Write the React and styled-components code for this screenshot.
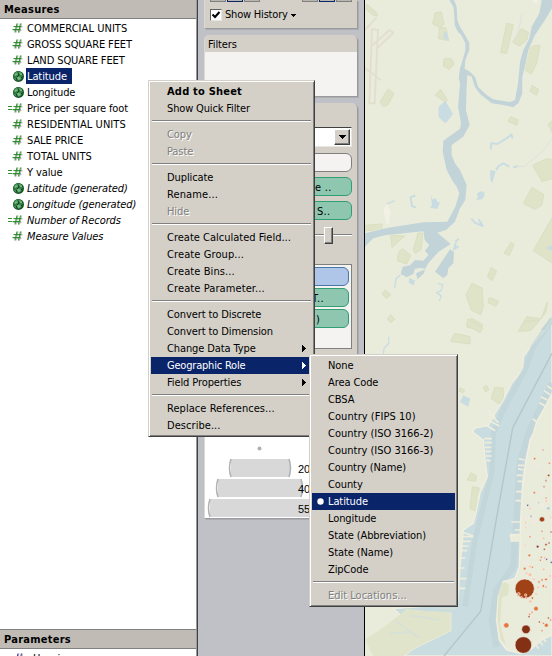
import React from "react";
import styled, { createGlobalStyle, css } from "styled-components";

const Global = createGlobalStyle`
  * { box-sizing: border-box; }
  body { margin: 0; overflow: hidden; font: 11px/16px "DejaVu Sans Condensed", "DejaVu Sans", sans-serif; font-stretch: condensed; color: #000; }
  svg { display: block; flex: none; }
`;

const Page = styled.div`
  position: relative;
  width: 552px;
  height: 656px;
  overflow: hidden;
  display: grid;
  grid-template-columns: 198px 166px 188px;
`;

const Text = styled.span`
  white-space: pre;
  letter-spacing: ${(p) => p.$ls ?? -0.1}px;
`;

/* Data pane */
const Sidebar = styled.aside`
  display: flex;
  flex-direction: column;
  height: 656px;
  background: #fff;
  border-right: 1px solid #404247;
  box-shadow: inset -1px 0 #9a9a9a;
`;
const SideHeader = styled.div`
  flex: none;
  height: ${(p) => (p.$ruled ? 20 : 19)}px;
  padding: 1px 0 0 4px;
  margin-right: 1px;
  line-height: 17px;
  font-weight: bold;
  background: #c0bcb5;
  border-bottom: 1px solid #808080;
  border-top: ${(p) => (p.$ruled ? "1px solid #808080" : "0")};
`;
const FieldList = styled.div`
  flex: 1;
  padding-top: 1px;
`;
const Field = styled.div`
  display: flex;
  align-items: center;
  height: 16px;
  font-style: ${(p) => (p.$generated ? "italic" : "normal")};
`;
const FieldIcon = styled.span`
  flex: none;
  width: 26px;
  padding-left: 7px;
`;
const FieldName = styled.span`
  height: 16px;
  padding: 0 5px 0 1px;
  line-height: 17px;
  background: ${(p) => (p.$selected ? "#0a246a" : "transparent")};
  color: ${(p) => (p.$selected ? "#fff" : "#000")};
`;
const Peek = styled.div`
  display: flex;
  gap: 7px;
  flex: none;
  height: 7px;
  padding: 2px 0 0 8px;
  overflow: hidden;
`;

/* Shelf column */
const Shelves = styled.section`
  display: flex;
  flex-direction: column;
  height: 656px;
  padding-left: 6px;
  background: #c0c1c6;
`;
const Card = styled.div`
  flex: none;
  width: 153px;
  height: ${(p) => p.$h}px;
  margin-bottom: ${(p) => p.$gap}px;
  background: #d4d0c8;
  border-left: 1px solid #dcd9d3;
  border-radius: ${(p) => (p.$square ? "0" : "5px 5px 0 0")};
  box-shadow: 1px 1px #999a9d, 2px 2px #acadb1;
`;
const ToolRow = styled.div`
  display: flex;
  gap: 1px;
  height: 2px;
  padding-left: 5px;
`;
const Tool = styled.span`
  width: 16px;
  height: 2px;
  margin-left: ${(p) => p.$space ?? 0}px;
  background: #b9b6b0;
  border: solid ${(p) => (p.$on ? "#0a246a" : "#808080")};
  border-width: 0 1px 1px;
`;
const History = styled.div`
  display: flex;
  align-items: center;
  gap: 3px;
  height: 16px;
  margin-top: 5px;
  padding-left: 5px;
`;
const Check = styled.span`
  width: 12px;
  height: 12px;
  background: #fff;
  border: 1px solid;
  border-color: #606060 #e8e6e0 #e8e6e0 #606060;
`;
const CardTitle = styled.div`
  height: 17px;
  padding-left: 3px;
  line-height: 19px;
`;
const DropArea = styled.div`
  height: 44px;
  background: #f4f3f1;
`;
const Marks = styled.div`
  display: flex;
  flex-direction: column;
  padding: 24px 5px 0 7px;
`;
const Select = styled.div`
  display: flex;
  justify-content: flex-end;
  height: 20px;
  padding: 1px;
  background: #fff;
  border: 1px solid;
  border-color: #404040 #e8e6e0 #e8e6e0 #404040;
`;
const SelectButton = styled.div`
  display: grid;
  place-items: center;
  width: 16px;
  height: 16px;
  background: #d4d0c8;
  border: 1px solid;
  border-color: #fff #404040 #404040 #fff;
  box-shadow: inset -1px -1px #808080;
`;
const tones = {
  plain: css`background: #f4f3f1; border-color: #808080;`,
  green: css`background: #8ec6b0; border-color: #319e74;`,
  blue: css`background: #b0c6e8; border-color: #4878a8;`,
};
const Pill = styled.div`
  flex: none;
  height: 19px;
  margin-top: ${(p) => p.$top}px;
  padding-left: ${(p) => p.$indent ?? 0}px;
  line-height: 19px;
  border: 1px solid;
  border-radius: 6px;
  ${(p) => tones[p.$tone]}
`;
const Slider = styled.div`
  display: flex;
  align-items: center;
  height: 18px;
  margin-top: 6px;
  padding-left: 112px;
  background: linear-gradient(#808080, #808080) 0 8px / 100% 1px no-repeat,
    linear-gradient(#fff, #fff) 0 9px / 100% 1px no-repeat;
`;
const Thumb = styled.div`
  width: 9px;
  height: 17px;
  background: #d4d0c8;
  border: 1px solid;
  border-color: #fff #404040 #404040 #fff;
  box-shadow: inset -1px -1px #808080;
`;
const DetailBox = styled.div`
  display: flex;
  flex-direction: column;
  height: 85px;
  margin-top: 20px;
  padding: 0 2px;
  background: #f4f3f1;
  border: 1px solid #808080;
`;
const Legend = styled(Card)`
  background: #fff;
`;

/* Map */
const MapPane = styled.main`
  border-left: 1px solid #000;
  background: #e9ecdb;
`;

/* Context menus */
const Menu = styled.div`
  position: absolute;
  left: ${(p) => p.$x}px;
  top: ${(p) => p.$y}px;
  width: ${(p) => p.$w}px;
  padding: 2px;
  background: #d4d0c8;
  border: 1px solid;
  border-color: #d4d0c8 #404040 #404040 #d4d0c8;
  box-shadow: inset 1px 1px #fff, inset -1px -1px #808080;
`;
const Item = styled.div`
  display: flex;
  align-items: center;
  height: 17px;
  padding-right: 6px;
  line-height: 17px;
  font-weight: ${(p) => (p.$bold ? "bold" : "normal")};
  ${(p) => p.$active && css`background: #0a246a; color: #fff;`}
  ${(p) => p.$disabled && css`color: #808080; text-shadow: 1px 1px #fff;`}
`;
const Gutter = styled.span`
  flex: none;
  display: grid;
  place-items: center;
  width: 16px;
`;
const ItemArrow = styled.span`
  margin-left: auto;
`;
const Rule = styled.div`
  height: 2px;
  margin: 3px 1px 4px;
  background: #fff;
  border-top: 1px solid #808080;
`;

const Hash = ({ calc, color = "#2f9130" }) => (
  <svg width="18" height="14" viewBox="0 0 18 14" fill="none">
    <path d="M9 11.500l2-9M12.500 11.500l2-9M7.500 6h8M6.500 9.500h8" stroke="#b4b4b4" />
    <path d="M8 11.500l2-9M11.500 11.500l2-9M6.500 5.500h8M5.500 8.500h8" stroke={color} strokeWidth="1.100" />
    {calc && <path d="M1 5.500h4M1 8.500h4" stroke={color} />}
  </svg>
);
const Globe = () => (
  <svg width="18" height="14" viewBox="0 0 18 14">
    <circle cx="11.500" cy="7.400" r="5.500" fill="#17502a" />
    <circle cx="11" cy="6.900" r="4.600" fill="#2f7a3e" />
    <path d="M7 6l2-2.500 2 .5-.5 2-2 1zM12 3l2.500 1 1 2.500-2.500-.5zM10 8l3-.5 1 2-2 2-1.500-1zM7 8.500l1.500 1 .5 2z" fill="#6fb67b" />
    <path d="M11 4l1 2-2 2M14 8l1 1M9 9l1 2" stroke="#123f20" fill="none" />
  </svg>
);
const Caret = ({ w = 7, h = 4 }) => (
  <svg width={w} height={h} viewBox="0 0 7 4" preserveAspectRatio="none" shapeRendering="crispEdges"><path d="M0 0h7L3.500 4z" /></svg>
);

const fields = [
  ["hash", "COMMERCIAL UNITS", 0, false, 0.05],
  ["hash", "GROSS SQUARE FEET"],
  ["hash", "LAND SQUARE FEET"],
  ["geo", "Latitude", 0, true],
  ["geo", "Longitude"],
  ["calc", "Price per square foot"],
  ["hash", "RESIDENTIAL UNITS", 0, false, 0.05],
  ["hash", "SALE PRICE"],
  ["hash", "TOTAL UNITS", 0, false, 0.05],
  ["calc", "Y value"],
  ["geo", "Latitude (generated)", 1],
  ["geo", "Longitude (generated)", 1],
  ["calc", "Number of Records", 1],
  ["hash", "Measure Values", 1],
];

const fieldMenu = [
  { t: "Add to Sheet", bold: true, ls: 0.2 }, { t: "Show Quick Filter", ls: -0.15 }, null,
  { t: "Copy", off: true }, { t: "Paste", off: true }, null,
  { t: "Duplicate" }, { t: "Rename...", ls: 0.1 }, { t: "Hide", off: true }, null,
  { t: "Create Calculated Field...", ls: 0 }, { t: "Create Group...", ls: 0.1 }, { t: "Create Bins...", ls: 0.1 }, { t: "Create Parameter...", ls: 0.1 }, null,
  { t: "Convert to Discrete" }, { t: "Convert to Dimension" }, { t: "Change Data Type", sub: true },
  { t: "Geographic Role", sub: true, active: true, ls: -0.2 }, { t: "Field Properties", sub: true }, null,
  { t: "Replace References...", ls: 0.05 }, { t: "Describe...", ls: 0.05 },
];
const roleMenu = [
  { t: "None" }, { t: "Area Code" }, { t: "CBSA" }, { t: "Country (FIPS 10)", ls: 0.05 }, { t: "Country (ISO 3166-2)", ls: 0 },
  { t: "Country (ISO 3166-3)", ls: 0 }, { t: "Country (Name)" }, { t: "County" }, { t: "Latitude", active: true, dot: true },
  { t: "Longitude" }, { t: "State (Abbreviation)" }, { t: "State (Name)" }, { t: "ZipCode" }, null,
  { t: "Edit Locations...", off: true, ls: 0 },
];

const ContextMenu = ({ items, x, y, w }) => (
  <Menu $x={x} $y={y} $w={w}>
    {items.map((it, i) =>
      it ? (
        <Item key={i} $bold={it.bold} $active={it.active} $disabled={it.off}>
          <Gutter>
            {it.dot && <svg width="7" height="7"><circle cx="3.500" cy="3.500" r="3.200" fill="#fff" /></svg>}
          </Gutter>
          <Text $ls={it.ls}>{it.t}</Text>
          {it.sub && (
            <ItemArrow>
              <svg width="4" height="7" shapeRendering="crispEdges"><path d="M0 0l4 3.500L0 7z" fill="currentColor" /></svg>
            </ItemArrow>
          )}
        </Item>
      ) : (
        <Rule key={i} />
      )
    )}
  </Menu>
);

/* Map geometry is drawn at three units per pixel */
const parks = [
  "20 12L50 38 52 48 40 46 18 28z", "226 38L244 36 252 72 240 82 218 72z", "238 82L258 84 266 122 236 116z",
  "440 70L460 74 440 160 422 158z", "484 86L506 98 500 120 478 138 458 126z", "500 150L520 138 540 136 530 190 514 222 492 208z",
  "252 176L274 176 282 192 268 208 250 198z", "84 268L102 280 84 314 70 320 60 306z", "226 286L242 268 262 300 256 306z",
  "516 256L536 268 530 286 510 274z", "452 350L474 360 470 376 444 364z", "564 372L580 360 580 405z",
  "518 496L560 476 580 480 580 535 546 544z", "516 562L552 584 545 616 524 628 490 610z", "15 676L66 672 66 690 15 692z",
  "92 706L134 708 96 742z", "174 698L188 700 184 748 166 760 160 750z", "128 746L152 766 140 792 112 782 116 756z",
  "578 650L578 790 520 752z", "454 726L462 734 448 766 432 760z", "394 802L410 814 396 842 382 830z",
  "336 850L366 864 370 920 362 944 334 930 318 884z", "388 892L416 904 408 918 384 908z", "76 870L92 884 80 896 66 882z",
  "92 944L104 958 92 968 82 956z", "334 954L368 974 362 990 322 982z", "482 986L500 950 544 956 562 906 558 936 530 970z",
  "324 956L368 984 360 998 320 976z", "492 964L540 960 512 992 475 994z", "284 1000L330 1010 330 1032 272 1024z",
  "380 1156L386 1170 376 1176 370 1162z", "404 1162L430 1164 430 1200 418 1212 394 1196z",
  "300 1164L314 1170 310 1178 298 1174z", "333 1418L350 1428 346 1444 322 1440z", "337 1460L358 1464 350 1490 354 1536 330 1526z",
];
const dots = [
  [549,1350,2.5,1],[524,1376,3.5,2],[529,1396,5,4],[568,1390,3,2],[551,1410,2.5,3],[566,1426,3.5,1],[558,1433,2.5,3],[552,1460,2.5,1],[558,1442,2.5,0],
  [523,1478,3.5,2],[546,1480,4,4],[558,1494,3,2],[559,1503,4,3],[536,1508,3,5],[503,1516,3,6],[496,1519,2.5,4],[510,1526,3.5,3],[565,1525,5,5],[547,1518,4,4],
  [513,1549,2.5,6],[501,1554,6,4],[523,1564,6,4],[546,1558,8,1],[572,1552,3,3],[497,1569,3.5,3],[546,1594,3,2],[498,1583,3,3],[573,1596,3,1],[510,1610,3,2],
  [558,1634,3.5,1],[567,1629,3,0],[551,1615,4,3],[533,1640,4,0],[553,1648,3,1],[496,1636,3,3],[508,1666,4,2],[544,1672,3,2],[560,1678,3,6],[574,1687,3,6],
  [496,1687,6,4],[554,1674,4,3],[541,1681,3,2],[494,1706,4,2],[510,1700,4,3],[517,1702,3,2],[500,1720,4,3],[510,1724,6,3],[551,1708,4,3],[522,1738,4,3],
  [537,1746,3.5,2],[546,1740,3.5,2],[558,1738,4,2],[570,1728,4,3],[534,1762,4,3],[550,1758,4,2],[558,1761,3,2],[528,1782,4,3],[517,1794,4,2],[511,1804,5,3],
  [494,1766,29,1],[476,1782,4.5,2],[484,1792,3,2],[497,1785,3.5,2],[499,1794,3,2],[528,1826,7,2],[516,1837,3,2],[509,1843,3,2],[507,1850,3,0],[439,1876,8,2],
  [538,1866,3,1],[559,1876,6,2],[565,1854,3,1],[572,1860,3,2],[550,1870,3,2],[498,1888,13,0],[515,1892,3,3],[546,1892,3,2],[490,1935,25,0],
];
const dotColors = ["#833015", "#a04116", "#e47740", "#f6c4a8", "#f1e7e2", "#a6c6df", "#2c5482"];

const Map = () => (
  <svg width="187" height="656" viewBox="15 0 561 1968">
    <rect x="15" width="561" height="1968" fill="#e9ecdb" />
    <g fill="none" stroke="#e2dfcf" strokeWidth="6" strokeLinejoin="round">
      <path d="M36 88L28 310H44L54 90zM38 136L88 90l12 8-48 46" />
      <path d="M15 90L50 52M15 204L62 240" />
    </g>
    <g fill="#dfe4c8" stroke="#d9dfc1" strokeWidth="3">
      {parks.map((d) => <path key={d} d={"M" + d} />)}
    </g>
    <path d="M70 626l12-14 10 24-6 38-8-4zM514 0h20l-4 12z" fill="#f1f1e4" />
    {/* Hackensack river and its branches */}
    <g fill="#c2d4d8">
      <path d="M268 0L280 20 283 50 284 76 294 96 304 106 316 130 316 150 308 180 300 205 296 235 300 250 294 320 303 370 300 386 250 422 248 455 260 510 276 540 290 560 298 580 286 620 262 665 190 667 80 684 15 700V740L40 715 75 706 190 694 194 720 208 735 195 752 205 765 190 782 165 780 150 796 128 800 122 822 140 832 160 822 165 806 180 804 196 806 205 790 235 756 272 732 232 698 258 690 285 665 300 625 316 600 320 555 300 510 285 490 275 465 275 435 310 410 329 375 318 330 320 260 322 225 335 230 345 262 360 282 395 310 425 314 460 322 475 310 487 280 487 230 497 190 505 150 525 105 555 60 576 25V0H545L538 40 515 80 508 115 490 150 480 185 474 250 465 300 450 306 400 298 380 285 355 262 345 230 330 215 314 206 316 180 328 150 328 128 312 100 300 80 292 60 290 20 282 0z" stroke="#eceddf" strokeWidth="3" paintOrder="stroke" />
      <path d="M270 748L282 756 280 790 265 805 262 825 250 835 225 815zM168 820L196 808 190 822 172 838zM576 950v40h-34z" />
    </g>
    <g fill="#c9dce2">
      <path d="M236 320l20-18 8 14 15 26-15 20-8 8-20-18z" />
      <path d="M252 94l8 4 6 22-16-4zM350 582l10-8 12 2 2 10-8 12-18 2 6-10zM390 510l17 4-6 20-4 16-6-10zM300 1206l10-20 21 10-7 24zM148 834l18 8-6 14-14-8zM212 585l6 14 8-6 6 12 8 2-8 20-22-4 6-8zM558 744l18-8v16z" />
    </g>
    <g fill="none" stroke="#c9dce2" strokeLinejoin="round">
      <path d="M392 448l2-18 18 2 26-16 16-12 4 12M408 510l8-12 14-8 18 10M460 502l14-4M166 586l-14 6 4 26 12 4M334 656l10 12 24 10-12-20M288 728l-6 20 14-10M296 716l-10 10" strokeWidth="6" />
      <path d="M234 850l14 4-4 18-14 6 14 10-6 14M80 612l24-10M104 864l4-28 14-12M86 1010v20l-14 16-2 18" strokeWidth="4" />
    </g>
    <path d="M470 500h22l60-50 24-38M486 40l-12 60-10 24" fill="none" stroke="#dfe2db" strokeWidth="3" />
    {/* Hudson */}
    <path d="M576 958L556 990 520 1030 490 1070 488 1110 455 1150 430 1200 405 1240 385 1276 345 1284 338 1296 370 1320 375 1380 382 1430 360 1480 350 1530 340 1570 310 1590 305 1650 300 1700 295 1780 292 1812 100 1826 130 1852 272 1840V1892L165 1944 130 1968H576z" fill="#c9dcdf" stroke="#f1efe0" strokeWidth="4" />
    <path d="M576 958L520 1040 495 1110 430 1230 400 1300 395 1420 370 1520 345 1620 315 1820" fill="none" stroke="#c1d4d9" strokeWidth="16" opacity=".7" />
    <path d="M576 1150L510 1290 480 1390 470 1560 460 1700 410 1770 396 1860 410 1940" fill="none" stroke="#c1d4d9" strokeWidth="20" opacity=".7" />
    <path d="M15 1918L60 1890 110 1852 140 1826 190 1832 272 1836V1892L165 1944 130 1968H40z" fill="#e0e4ca" />
    <path d="M150 1846l90 14M110 1865l70 50M90 1900l60-4M236 1826h50" stroke="#d5e0d8" strokeWidth="5" />
    <path d="M576 1180L556 1220 530 1265 520 1300 510 1320 500 1370 495 1400 488 1450 485 1510 482 1560 480 1640 478 1700 465 1735 430 1745 415 1790 410 1860 418 1920 440 1950 480 1960 510 1950 545 1920 576 1905z" fill="#e9ecdb" stroke="#f3f0e2" strokeWidth="4" />
    <path d="M436 1746l12 10-4 30-18 6-6 80 18 64-16-16-10-64 4-70 12-38z" fill="#dfe4c8" />
    <path d="M576 1060L458 1284 412 1540 362 1834 252 1968" fill="none" stroke="#b4c6c6" strokeWidth="4" />
    {/* Piers */}
    <g stroke="#f0eddc" strokeWidth="5" fill="none">
      <path d="M388 1262l30 16M390 1244l26 24M378 1276l28 16M372 1316h24M374 1328h22M374 1342h20M376 1354h18M376 1368h20M378 1382h14M384 1230l22 24M300 1594l40 14M300 1610h40M296 1624h36M296 1638h30M296 1652h26M292 1674h24M292 1704h22M292 1736h28M292 1765h24" />
      <path d="M576 1168l-14-10M570 1184l-18-12M562 1200l-20-10M556 1218l-18-10M530 1266l-12-10M494 1380l-18-4M492 1396h-18M490 1410l-16-4M488 1426h-18M488 1444h-16M486 1475h-18M484 1502h-18M484 1566h-30M480 1590h-16M476 1622h-24M548 1936l-14-20M536 1946l-14-20M558 1926l-14-18" />
      <path d="M452 1604h30v18h-28z" fill="#e9ecdb" />
    </g>
    <g stroke="#f4ece6" strokeWidth="2">
      {dots.map(([x, y, r, c], i) => (
        <circle key={i} cx={x} cy={y} r={r} fill={dotColors[c]} />
      ))}
    </g>
  </svg>
);

const SizeLegend = () => (
  <svg width="152" height="81" viewBox="205 437 152 81" fontFamily="'Liberation Sans', Arial, sans-serif" fontSize="11">
    <circle cx="259.500" cy="448.500" r="2" fill="#b0b0b0" />
    {[[229, 291, 459, "20"], [216, 303, 479, "40"], [208, 346, 499, "55"]].map(([a, b, y, n]) => (
      <g key={y}>
        <path d={`M${a + 2} ${y}H${b - 2}Q${b + 1} ${y + 9} ${b - 2} ${y + 18}H${a + 2}Q${a - 1} ${y + 9} ${a + 2} ${y + 18}z`} fill="#d8d8d8" />
        <path d={`M${a + 2} ${y}H${b - 2}V${y + 18}H${a + 2}z`} fill="#d8d8d8" />
        <path d={`M${a + 2} ${y}Q${a - 1} ${y + 9} ${a + 2} ${y + 18}M${b - 2} ${y}Q${b + 1} ${y + 9} ${b - 2} ${y + 18}`} fill="none" stroke="#b0b0b0" strokeWidth="1.500" />
        <text x="298" y={y + 14}>{n}</text>
      </g>
    ))}
  </svg>
);

export default function App() {
  return (
    <Page>
      <Global />
      <Sidebar>
        <SideHeader><Text $ls={0.25}>Measures</Text></SideHeader>
        <FieldList>
          {fields.map(([kind, name, gen, sel, ls]) => (
            <Field key={name} $generated={gen}>
              <FieldIcon>{kind === "geo" ? <Globe /> : <Hash calc={kind === "calc"} />}</FieldIcon>
              <FieldName $selected={sel}><Text $ls={ls}>{name}</Text></FieldName>
            </Field>
          ))}
        </FieldList>
        <SideHeader $ruled><Text $ls={0.25}>Parameters</Text></SideHeader>
        <Peek><Hash color="#4a3aa0" /><Text>Housing</Text></Peek>
      </Sidebar>

      <Shelves>
        <Card $h={28} $gap={7} $square>
          <ToolRow>
            <Tool /><Tool $on /><Tool /><Tool $space={41} /><Tool $on /><Tool />
          </ToolRow>
          <History>
            <Check>
              <svg width="10" height="10" viewBox="0 0 10 10"><path d="M1.500 4.500l2.500 2.500 4.500-5" fill="none" stroke="#000" strokeWidth="2" /></svg>
            </Check>
            <Text $ls={-0.2}>Show History</Text>
            <Caret w={5} h={3} />
          </History>
        </Card>
        <Card $h={61} $gap={7}>
          <CardTitle><Text>Filters</Text></CardTitle>
          <DropArea />
        </Card>
        <Card $h={270} $gap={64}>
          <Marks>
            <Select><SelectButton><Caret /></SelectButton></Select>
            <Pill $tone="plain" $top={6} />
            <Pill $tone="green" $top={5} $indent={102}><Text $ls={0.3}>e ..</Text></Pill>
            <Pill $tone="green" $top={5} $indent={104}><Text $ls={0.3}>S..</Text></Pill>
            <Slider><Thumb /></Slider>
            <DetailBox>
              <Pill $tone="blue" $top={2} />
              <Pill $tone="green" $top={2} $indent={96}><Text $ls={0.3}>T..</Text></Pill>
              <Pill $tone="green" $top={2} $indent={100}><Text $ls={0}>)</Text></Pill>
            </DetailBox>
          </Marks>
        </Card>
        <Legend $h={81} $gap={0} $square>
          <SizeLegend />
        </Legend>
      </Shelves>

      <MapPane><Map /></MapPane>

      <ContextMenu items={fieldMenu} x={148} y={80} w={167} />
      <ContextMenu items={roleMenu} x={309} y={354} w={149} />
    </Page>
  );
}
